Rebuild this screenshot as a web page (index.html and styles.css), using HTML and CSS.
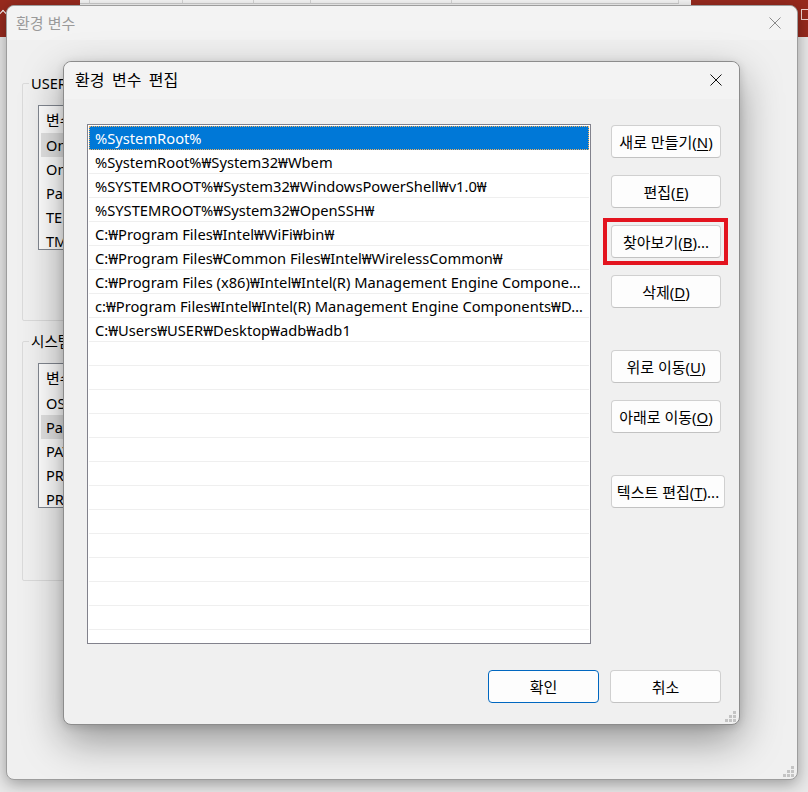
FILE: index.html
```html
<!DOCTYPE html>
<html lang="ko">
<head>
<meta charset="utf-8">
<title>환경 변수 편집</title>
<link rel="stylesheet" href="styles.css">
</head>
<body>
<div class="desktop">
  <div class="desk-top">
    <div class="red-block red-left"><span class="caret"></span></div>
    <div class="strip">
      <div class="strip-cell w10"></div>
      <div class="strip-cell w93"></div>
      <div class="strip-cell w71"></div>
      <div class="strip-cell w57"></div>
      <div class="strip-cell w141"></div>
      <div class="strip-cell w227"></div>
    </div>
    <div class="red-block red-right"><span class="max-icon"></span></div>
  </div>
</div>

<section class="window outer">
  <header class="titlebar outer-titlebar">
    <span class="title">환경 변수</span>
    <svg class="close-x" width="12" height="12" viewBox="0 0 12 12" aria-hidden="true"><path d="M0.5 0.5L11.5 11.5M11.5 0.5L0.5 11.5" stroke="#8a8a8a" stroke-width="1"/></svg>
  </header>
  <div class="outer-body">
    <div class="group group-user">
      <div class="group-label">USER에 대한 사용자 변수(<u>U</u>)</div>
      <div class="var-list">
        <div class="var-head"><span class="col-name">변수</span><span>값</span></div>
        <div class="var-row sel">OneDrive</div>
        <div class="var-row">OneDriveConsumer</div>
        <div class="var-row">Path</div>
        <div class="var-row">TEMP</div>
        <div class="var-row">TMP</div>
      </div>
    </div>
    <div class="group group-sys">
      <div class="group-label">시스템 변수(<u>S</u>)</div>
      <div class="var-list">
        <div class="var-head"><span class="col-name">변수</span><span>값</span></div>
        <div class="var-row">OS</div>
        <div class="var-row sel">Path</div>
        <div class="var-row">PATHEXT</div>
        <div class="var-row">PROCESSOR_ARCHITECTURE</div>
        <div class="var-row">PROCESSOR_IDENTIFIER</div>
      </div>
    </div>
  </div>
  <svg class="grip" width="12" height="12" viewBox="0 0 12 12" aria-hidden="true"><g fill="#c4c4c4"><rect x="8" y="0" width="3" height="3"/><rect x="8" y="4" width="3" height="3"/><rect x="4" y="4" width="3" height="3"/><rect x="8" y="8" width="3" height="3"/><rect x="4" y="8" width="3" height="3"/><rect x="0" y="8" width="3" height="3"/></g></svg>
</section>

<section class="window dialog">
  <header class="titlebar dialog-titlebar">
    <span class="title">환경 변수 편집</span>
    <svg class="close-x" width="12" height="12" viewBox="0 0 12 12" aria-hidden="true"><path d="M0.5 0.5L11.5 11.5M11.5 0.5L0.5 11.5" stroke="#111" stroke-width="1"/></svg>
  </header>
  <div class="dialog-body">
    <div class="main-row">
      <div class="path-list">
        <div class="path-row sel">%SystemRoot%</div>
        <div class="path-row">%SystemRoot%₩System32₩Wbem</div>
        <div class="path-row">%SYSTEMROOT%₩System32₩WindowsPowerShell₩v1.0₩</div>
        <div class="path-row">%SYSTEMROOT%₩System32₩OpenSSH₩</div>
        <div class="path-row">C:₩Program Files₩Intel₩WiFi₩bin₩</div>
        <div class="path-row">C:₩Program Files₩Common Files₩Intel₩WirelessCommon₩</div>
        <div class="path-row">C:₩Program Files (x86)₩Intel₩Intel(R) Management Engine Components₩iCLS₩</div>
        <div class="path-row">c:₩Program Files₩Intel₩Intel(R) Management Engine Components₩DAL₩</div>
        <div class="path-row">C:₩Users₩USER₩Desktop₩adb₩adb1</div>
        <div class="path-row"></div>
        <div class="path-row"></div>
        <div class="path-row"></div>
        <div class="path-row"></div>
        <div class="path-row"></div>
        <div class="path-row"></div>
        <div class="path-row"></div>
        <div class="path-row"></div>
        <div class="path-row"></div>
        <div class="path-row"></div>
        <div class="path-row"></div>
        <div class="path-row"></div>
        <div class="path-row"></div>
        <div class="path-row"></div>
      </div>
      <div class="side-buttons">
        <button class="btn">새로 만들기(<u>N</u>)</button>
        <button class="btn">편집(<u>E</u>)</button>
        <div class="highlight-wrap">
          <button class="btn">찾아보기(<u>B</u>)...</button>
          <span class="highlight"></span>
        </div>
        <button class="btn">삭제(<u>D</u>)</button>
        <button class="btn gap-lg">위로 이동(<u>U</u>)</button>
        <button class="btn">아래로 이동(<u>O</u>)</button>
        <button class="btn gap-lg btn-wide">텍스트 편집(<u>T</u>)...</button>
      </div>
    </div>
    <div class="footer">
      <button class="btn btn-foot btn-default">확인</button>
      <button class="btn btn-foot">취소</button>
    </div>
  </div>
  <svg class="grip" width="12" height="12" viewBox="0 0 12 12" aria-hidden="true"><g fill="#c4c4c4"><rect x="8" y="0" width="3" height="3"/><rect x="8" y="4" width="3" height="3"/><rect x="4" y="4" width="3" height="3"/><rect x="8" y="8" width="3" height="3"/><rect x="4" y="8" width="3" height="3"/><rect x="0" y="8" width="3" height="3"/></g></svg>
</section>
</body>
</html>
```

FILE: styles.css
```css
* { box-sizing: border-box; }

html, body {
  margin: 0;
  padding: 0;
}

body {
  width: 808px;
  height: 792px;
  overflow: hidden;
  position: relative;
  background: #ececec;
  font-family: "Noto Sans", "Noto Sans CJK KR", sans-serif;
  font-size: 14px;
  color: #000;
}

/* ---------- desktop behind ---------- */
.desktop {
  height: 792px;
  background: #e9e9e9;
}

.desk-top {
  display: flex;
  height: 37px;
}

.red-block {
  background: #982a1e;
  position: relative;
}

.red-left { width: 80px; }
.red-right { flex: 1; }

.caret {
  position: absolute;
  left: 0;
  top: 11px;
  width: 6px;
  height: 6px;
  border-left: 1px solid #fff;
  border-top: 1px solid #fff;
  transform: rotate(45deg);
}

.max-icon {
  position: absolute;
  right: -4px;
  top: 9px;
  width: 11px;
  height: 11px;
  border: 1px solid #f2d8d4;
}

.strip {
  display: flex;
  width: 611px;
  background: #f7f7f7;
}

.strip-cell {
  height: 4px;
  border-right: 1px solid #d6d6d6;
  border-bottom: 1px solid #cfcfcf;
}

.w10 { width: 10px; }
.w93 { width: 93px; }
.w71 { width: 71px; }
.w57 { width: 57px; }
.w141 { width: 141px; }
.w227 { width: 227px; }

/* ---------- windows ---------- */
.window {
  position: absolute;
  background: #f0f0f0;
  border: 1px solid #a9a9a9;
  border-radius: 8px;
  display: flex;
  flex-direction: column;
}

.titlebar {
  display: flex;
  align-items: center;
  justify-content: space-between;
  background: #f3f3f3;
  border-radius: 8px 8px 0 0;
  flex: none;
}

.title {
  font-family: "Noto Sans CJK KR", sans-serif;
}

.grip {
  position: absolute;
  right: 2px;
  bottom: 1px;
}

/* outer window */
.outer {
  left: 6px;
  top: 5px;
  width: 792px;
  height: 775px;
  border-color: #9d9d9d;
  box-shadow: 0 4px 16px rgba(0, 0, 0, 0.34);
}

.outer-titlebar {
  height: 34px;
  padding: 0 16px 0 9px;
}

.outer-titlebar .title {
  font-size: 15px;
  color: #9a9a9a;
  margin-top: -2px;
}

.outer-body {
  padding: 43px 0 0 15px;
  display: flex;
  flex-direction: column;
}

.group {
  border: 1px solid #dadada;
  border-radius: 2px;
  width: 700px;
  display: flex;
  flex-direction: column;
  align-items: flex-start;
}

.group-user { height: 238px; }
.group-sys { height: 240px; margin-top: 20px; }

.group-label {
  margin: -11px 0 0 6px;
  padding: 0 2px;
  line-height: 20px;
  font-size: 14.6px;
  background: #f0f0f0;
}

.var-list {
  margin: 12px 0 0 15px;
  width: 640px;
  height: 145px;
  background: #fff;
  border: 1px solid #828790;
  overflow: hidden;
}

.var-head {
  height: 27px;
  display: flex;
  align-items: center;
  padding-left: 7px;
  font-family: "Noto Sans CJK KR", sans-serif;
  font-size: 15px;
}

.col-name { width: 180px; }

.var-row {
  height: 24px;
  line-height: 24px;
  padding-left: 7px;
  font-size: 14.6px;
}

.var-row.sel { background: #e3e3e3; margin: 0 2px; padding-left: 5px; }

/* dialog */
.dialog {
  left: 63px;
  top: 61px;
  width: 677px;
  height: 664px;
  border-color: #8c8c8c;
  box-shadow: 0 16px 42px rgba(0, 0, 0, 0.38), 0 2px 8px rgba(0, 0, 0, 0.14);
}

.dialog-titlebar {
  height: 37px;
  padding: 0 17px 0 11px;
}

.dialog-titlebar .title {
  font-size: 16px;
  color: #000;
  word-spacing: 3px;
  margin-top: -3px;
}

.dialog-titlebar .close-x { margin-top: -1px; }

.dialog-body {
  padding: 25px 18px 0 23px;
  display: flex;
  flex-direction: column;
}

.main-row {
  display: flex;
  gap: 20px;
}

.path-list {
  width: 504px;
  height: 520px;
  flex: none;
  background: #fff;
  border: 1px solid #82828c;
  padding: 1px;
  overflow: hidden;
}

.path-row {
  height: 24px;
  line-height: 22px;
  padding: 1px 4px 0 6px;
  border-bottom: 1px solid #efefef;
  white-space: nowrap;
  overflow: hidden;
  text-overflow: ellipsis;
  font-size: 14.7px;
  color: #000;
}

.path-row.sel {
  background: #0078d7;
  color: #fff;
  outline: 1px dotted #f0b060;
  outline-offset: -1px;
  border-bottom-color: #0078d7;
}

.side-buttons {
  display: flex;
  flex-direction: column;
  align-items: flex-start;
  padding-top: 1px;
}

.btn {
  width: 110px;
  height: 33px;
  margin: 0 0 17px 0;
  padding: 0;
  background: #fdfdfd;
  border: 1px solid #d0d0d0;
  border-bottom-color: #c2c2c2;
  border-radius: 4px;
  font-family: "Noto Sans", "Noto Sans CJK KR", sans-serif;
  font-size: 15px;
  color: #000;
  white-space: nowrap;
}

.btn u { text-underline-offset: 2px; }

.gap-lg { margin-top: 25px; }

.btn-wide { width: 114px; }

.highlight-wrap {
  position: relative;
}

.highlight {
  position: absolute;
  left: -8px;
  top: -7px;
  width: 125px;
  height: 47px;
  border: 4px solid #e3141f;
  pointer-events: none;
}

.footer {
  display: flex;
  justify-content: flex-end;
  gap: 11px;
  margin-top: 26px;
}

.btn-foot {
  width: 111px;
  margin: 0;
  font-size: 15px;
}

.btn-default {
  border: 1px solid #0067c0;
}
```
